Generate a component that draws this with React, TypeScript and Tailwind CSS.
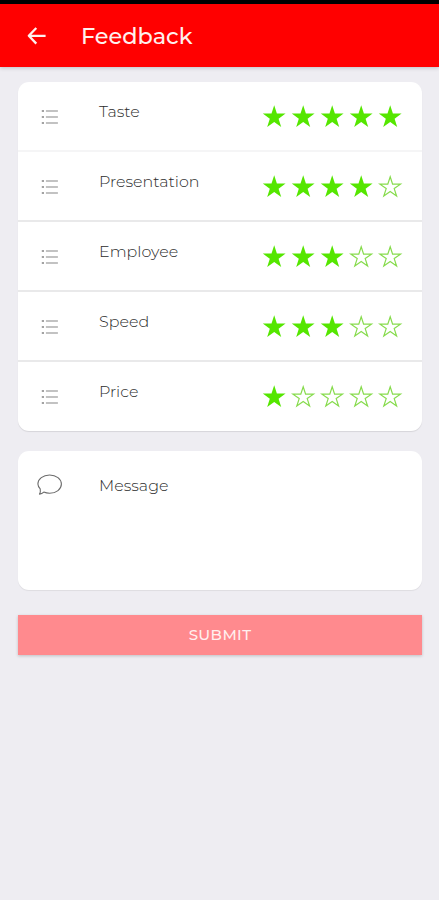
import { useState } from "react";
import clsx from "clsx";

interface Rating {
  label: string;
  stars: number;
}

const initialRatings: Rating[] = [
  { label: "Taste", stars: 5 },
  { label: "Presentation", stars: 4 },
  { label: "Employee", stars: 3 },
  { label: "Speed", stars: 3 },
  { label: "Price", stars: 1 },
];

function BackArrow() {
  return (
    <svg width="20" height="20" viewBox="0 0 20 20" fill="none" stroke="#fff0ee" strokeWidth="2.3" strokeLinejoin="round">
      <path d="M18.6 9.8H2M9.3 2 1.8 9.8l7.5 7.8" />
    </svg>
  );
}

function ListIcon() {
  return (
    <svg width="18" height="16" viewBox="0 0 18 16" fill="none" stroke="#858585" strokeWidth="1.1">
      <path d="M4.9 2h12M4.9 8h12M4.9 14h12" />
      <path d="M.8 2h2.2M.8 8h2.2M.8 14h2.2" strokeWidth="1.5" />
    </svg>
  );
}

function BubbleIcon() {
  return (
    <svg width="26" height="22" viewBox="0 0 26 22" fill="none" stroke="#6b6b6b" strokeWidth="1.1" strokeLinejoin="round">
      <path d="M3.2 14.8C1.7 13.3.9 11.9.9 10.1.9 5 6 1 12.6 1s11.8 4 11.8 9.1-5.2 9.2-11.8 9.2c-2.1 0-4.1-.4-5.8-1.2-1.2 1.1-2.4 1.8-4.3 2 .8-1.5 1.1-3.4.7-5.3Z" />
    </svg>
  );
}

function Star({ filled }: { filled: boolean }) {
  return (
    <svg width="25" height="24" viewBox="0 0 25 24">
      {filled ? (
        <path d="M12.2.3 14.9 8.6H23.6L16.6 13.7 19.2 22 12.2 17 5.2 22 7.8 13.7.8 8.6H9.5Z" fill="#55e600" />
      ) : (
        <path
          d="M12.2 1.8 14.6 9.2H22.5L16.2 13.6 18.6 21 12.2 16.5 5.8 21 8.2 13.6 1.9 9.2H9.8Z"
          fill="none"
          stroke="#86db4c"
          strokeWidth="1.2"
        />
      )}
    </svg>
  );
}

export default function App() {
  const [ratings, setRatings] = useState(initialRatings);

  const rate = (index: number, stars: number) => {
    setRatings(ratings.map((r, i) => (i === index ? { ...r, stars } : r)));
  };

  return (
    <div className="h-[900px] bg-[#eeedf2] font-['Montserrat',Inter,sans-serif] text-[#2b2b2b]">
      <header className="flex h-[67px] items-center border-t-4 border-black bg-[#ff0000] pl-[27px] shadow-[0_1px_4px_rgba(0,0,0,0.2)]">
        <button aria-label="Back">
          <BackArrow />
        </button>
        <h1 className="ml-[34px] pt-px text-[22.4px] font-medium leading-[30px] text-[#fff0ee]">Feedback</h1>
      </header>

      <main className="pl-[18px] pr-[17px] pt-[15px]">
        <section className="rounded-[11px] bg-white shadow-[0_1px_1px_rgba(0,0,0,0.1)]">
          {ratings.map((rating, i) => (
            <div
              key={rating.label}
              className={clsx(
                "flex pl-[23px] pr-[19px]",
                i === ratings.length - 1 ? "h-[69px]" : "h-[70px] border-b-2",
                i === 0 ? "border-[#f5f5f6]" : "border-[#e9e9ea]"
              )}
            >
              <div className="w-[58px] pt-[27px]">
                <ListIcon />
              </div>
              <span className="flex-1 pt-5 text-[15.9px] font-light leading-5">{rating.label}</span>
              <div className="flex gap-1 pt-[23px]">
                {[1, 2, 3, 4, 5].map((n) => (
                  <button key={n} className="h-6" onClick={() => rate(i, n)} aria-label={`${rating.label} ${n}`}>
                    <Star filled={n <= rating.stars} />
                  </button>
                ))}
              </div>
            </div>
          ))}
        </section>

        <section className="mt-5 flex h-[139px] rounded-[11px] bg-white pl-[19px] pt-[23px] shadow-[0_1px_1px_rgba(0,0,0,0.07)]">
          <BubbleIcon />
          <span className="ml-9 text-[15.9px] font-light leading-[23px]">Message</span>
        </section>

        <button className="mt-[25px] h-10 w-full bg-[#ff8a8e] text-[15px] font-medium leading-10 tracking-[0.4px] text-[#fff0ee] shadow-[0_1px_3px_rgba(0,0,0,0.2)]">
          SUBMIT
        </button>
      </main>
    </div>
  );
}
